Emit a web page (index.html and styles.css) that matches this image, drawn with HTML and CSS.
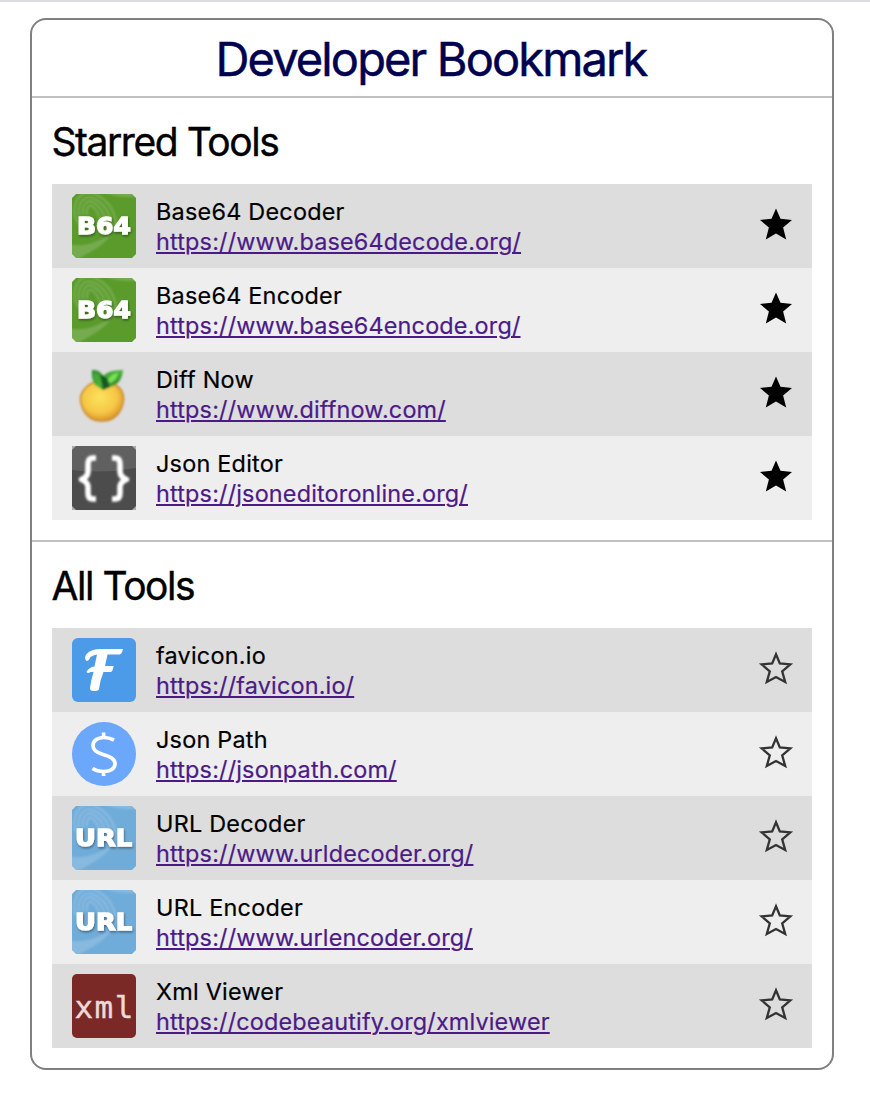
FILE: index.html
```html
<!DOCTYPE html>
<html lang="en">
<head>
<meta charset="utf-8">
<title>Developer Bookmark</title>
<link rel="stylesheet" href="styles.css">
</head>
<body>
<svg class="defs" width="0" height="0" aria-hidden="true">
  <defs>
    <filter id="soft" x="-10%" y="-10%" width="120%" height="120%"><feGaussianBlur stdDeviation=".9"/></filter>
    <filter id="glow" x="-20%" y="-20%" width="140%" height="150%"><feGaussianBlur stdDeviation=".5"/><feDropShadow dx=".8" dy="1.6" stdDeviation="1" flood-color="#000" flood-opacity=".4"/></filter>
    <radialGradient id="lemon" cx=".45" cy=".4" r=".6"><stop offset="0" stop-color="#fbe25c"/><stop offset=".65" stop-color="#f6c746"/><stop offset="1" stop-color="#dc9628"/></radialGradient>
    <linearGradient id="leaf" x1="0" y1="0" x2="1" y2="1"><stop offset="0" stop-color="#2e8a2e"/><stop offset=".5" stop-color="#4cb338"/><stop offset="1" stop-color="#1d6b22"/></linearGradient>
    <clipPath id="tile"><path d="M4 0H60L64 4V60L60 64H4L0 60V4Z"/></clipPath>
    <g id="print" fill="none" stroke="#fff" stroke-opacity=".19" stroke-width="2.1" filter="url(#soft)">
      <path d="M-4 50C10 54 30 48 41 37C35 50 20 57 4 66H-4Z" fill="#fff" fill-opacity=".17" stroke="none"/>
      <path d="M28-4C40 3 54 4 68 2V-4Z" fill="#fff" fill-opacity=".17" stroke="none"/>
      <path d="M3 23C0 4 12-6 25 1C38 8 44 20 44 34M7 22C5 7 14 0 23 5C34 11 39 21 39 34M11 21C10 10 16 4 22 9C30 14 34 23 34 34M15 21C14 13 18 9 21 13C27 18 29 25 29 34M3 23L9 33"/>
    </g>
    <g id="b64"><g clip-path="url(#tile)"><path fill="#5a9b2b" d="M0 0H64V64H0Z"/><use href="#print"/></g><text class="tile-text" x="32" y="40.2" textLength="54" lengthAdjust="spacingAndGlyphs" filter="url(#glow)">B64</text></g>
    <g id="url"><g clip-path="url(#tile)"><path fill="#70acd9" d="M0 0H64V64H0Z"/><use href="#print"/></g><text class="tile-text" x="31.6" y="40.2" textLength="57" lengthAdjust="spacingAndGlyphs" filter="url(#glow)">URL</text></g>
    <path id="star" d="M16 .4L20.5 10.8L32 12L23.1 19.4L26.2 31.5L16 25.6L5.8 31.5L8.9 19.4L0 12L11.5 10.8Z"/>
    <path id="star-line" d="M16 2.2L19.800 11.500L30.300 12.400L22.200 19.300L25.200 30L16 25L6.800 30L9.800 19.300L1.700 12.400L12.200 11.500Z"/>
  </defs>
</svg>
<main class="card">
  <header class="card-header"><h1 class="title">Developer Bookmark</h1></header>
  <section class="section">
    <h2 class="section-title">Starred Tools</h2>
    <ul class="tools starred">
      <li class="tool"><svg class="icon" viewBox="0 0 64 64"><use href="#b64"/></svg><div class="info"><span class="name">Base64 Decoder</span><a class="link" href="#">https://www.base64decode.org/</a></div><svg class="star" viewBox="0 0 32 32"><use href="#star"/></svg></li>
      <li class="tool"><svg class="icon" viewBox="0 0 64 64"><use href="#b64"/></svg><div class="info"><span class="name">Base64 Encoder</span><a class="link" href="#">https://www.base64encode.org/</a></div><svg class="star" viewBox="0 0 32 32"><use href="#star"/></svg></li>
      <li class="tool"><svg class="icon" viewBox="0 0 64 64"><g filter="url(#soft)"><path d="M23 20H38C48 24 52 31 51.500 38C50 51 42 59 30 59S10 51 8.500 38C8 31 14 23 23 20Z" fill="url(#lemon)" stroke="#c98b30" stroke-width="1.600"/><path d="M20 8Q28 7 31 14Q36 8 51 8Q50 22 38 25L31 28L23 23Q19 17 20 8Z" fill="url(#leaf)"/><path d="M28 12L31 28L38 25L35 16Z" fill="#195a22"/><path d="M36 18Q40 11 46 11Q45 18 38 21Z" fill="#7ae05a"/><path d="M22 11Q26 11 27 18L23 18Z" fill="#48ad3a"/></g></svg><div class="info"><span class="name">Diff Now</span><a class="link" href="#">https://www.diffnow.com/</a></div><svg class="star" viewBox="0 0 32 32"><use href="#star"/></svg></li>
      <li class="tool"><svg class="icon" viewBox="0 0 64 64"><path fill="#4c4c4c" d="M0 0H64V64H0Z"/><path fill="#606060" d="M0 0H64V22Q32 28 0 24Z"/><path d="M0 0H4L0 4ZM60 0H64V4ZM0 60L4 64H0ZM64 60V64H60Z" fill="#aaa"/><g fill="none" stroke="#fff" stroke-width="5.600" stroke-linejoin="round" filter="url(#soft)"><path d="M24 12H21Q16 12 16 18V25Q16 31 9.500 33.500Q16 36 16 41V47Q16 53 21 53H24"/><path d="M40 12H43Q48 12 48 18V25Q48 31 54.500 33.500Q48 36 48 41V47Q48 53 43 53H40"/></g></svg><div class="info"><span class="name">Json Editor</span><a class="link" href="#">https://jsoneditoronline.org/</a></div><svg class="star" viewBox="0 0 32 32"><use href="#star"/></svg></li>
    </ul>
  </section>
  <section class="section">
    <h2 class="section-title">All Tools</h2>
    <ul class="tools">
      <li class="tool"><svg class="icon" viewBox="0 0 64 64"><rect width="64" height="64" rx="6" fill="#4b9be8"/><path d="M51 11Q50 16 47.500 16.500H35.500L33 28H41.500Q41 33 39 34L31.500 34Q28 42 27 51Q26.500 53 22 53Q17.500 53 18 50Q19 42 21.500 34H18.500Q16 36 14.500 34Q17 29 22.500 28.500L25 16.500Q21 17 18.500 19Q17 23 14.500 23Q11.500 20 14.500 16Q19 11 29 11Z" fill="#fff"/></svg><div class="info"><span class="name">favicon.io</span><a class="link" href="#">https://favicon.io/</a></div><svg class="star" viewBox="0 0 32 32"><use href="#star-line"/></svg></li>
      <li class="tool"><svg class="icon" viewBox="0 0 64 64"><circle cx="32" cy="32" r="32" fill="#6ba7fa"/><path d="M42 18Q37 15.500 32 15.500C25 15.500 21 19 21 23.500C21 28 24 30.500 31 32.500C39 34.800 43 37 43 41.500C43 46.500 38.500 49.500 31.500 49.500Q25 49.500 20.500 46.500M31.600 10.500V15.500M31.600 49.500V54" fill="none" stroke="#fff" stroke-width="3.700"/></svg><div class="info"><span class="name">Json Path</span><a class="link" href="#">https://jsonpath.com/</a></div><svg class="star" viewBox="0 0 32 32"><use href="#star-line"/></svg></li>
      <li class="tool"><svg class="icon" viewBox="0 0 64 64"><use href="#url"/></svg><div class="info"><span class="name">URL Decoder</span><a class="link" href="#">https://www.urldecoder.org/</a></div><svg class="star" viewBox="0 0 32 32"><use href="#star-line"/></svg></li>
      <li class="tool"><svg class="icon" viewBox="0 0 64 64"><use href="#url"/></svg><div class="info"><span class="name">URL Encoder</span><a class="link" href="#">https://www.urlencoder.org/</a></div><svg class="star" viewBox="0 0 32 32"><use href="#star-line"/></svg></li>
      <li class="tool"><svg class="icon" viewBox="0 0 64 64"><rect width="64" height="64" rx="5" fill="#7b2927"/><text class="xml-text" x="2.500" y="44.300">xml</text></svg><div class="info"><span class="name">Xml Viewer</span><a class="link" href="#">https://codebeautify.org/xmlviewer</a></div><svg class="star" viewBox="0 0 32 32"><use href="#star-line"/></svg></li>
    </ul>
  </section>
</main>
</body>
</html>
```

FILE: styles.css
```css
* { box-sizing: border-box; }
body {
  margin: 0;
  padding: 16px 36px 0 30px;
  border-top: 2px solid #dcdbe0;
  background: #fff;
  color: #000;
  font-family: Inter, "Liberation Sans", sans-serif;
}
.defs { position: absolute; }
.card {
  border: 2px solid #808080;
  border-radius: 16px;
}
.card-header {
  height: 78px;
  border-bottom: 2px solid #c0c0c0;
}
.title {
  margin: 0;
  padding-right: 2px;
  color: #000050;
  font-size: 47px;
  font-weight: 400;
  line-height: 78px;
  letter-spacing: -1.87px;
  text-align: center;
  -webkit-text-stroke: .5px #000050;
}
.section { padding: 20px; }
.section + .section { border-top: 2px solid #c0c0c0; }
.section-title {
  height: 46px;
  margin: 0 0 20px -.5px;
  font-size: 39px;
  font-weight: 400;
  line-height: 48px;
  letter-spacing: -1.45px;
  -webkit-text-stroke: .4px #000;
}
.tools { margin: 0; padding: 0; list-style: none; }
.tool {
  display: flex;
  align-items: center;
  gap: 20px;
  height: 84px;
  margin-left: 0;
  padding: 0 20px;
  background: #eee;
}
.tool:nth-child(odd) { background: #ddd; }
.icon { flex: none; width: 64px; height: 64px; }
.info {
  flex: 1;
  display: flex;
  flex-direction: column;
  align-items: flex-start;
  padding-top: 2px;
  font-size: 23.4px;
  line-height: 30px;
  letter-spacing: .18px;
  font-variant-ligatures: none;
  -webkit-text-stroke: .2px;
}
.name { letter-spacing: .24px; }
.link {
  color: #4c1a88;
  text-decoration: underline;
  text-decoration-thickness: 2px;
  text-underline-offset: 2px;
}
.star {
  flex: none;
  width: 32px;
  height: 32px;
  margin-bottom: 4px;
  fill: none;
  stroke: #333;
  stroke-width: 2.3;
  overflow: visible;
}
.starred .star { fill: #000; stroke: none; }
.tile-text {
  fill: #fff;
  stroke: #fff;
  stroke-width: 1.3;
  font-family: "DejaVu Sans", sans-serif;
  font-size: 23px;
  font-weight: 700;
  text-anchor: middle;
}
.xml-text {
  fill: #eed9d9;
  stroke: #eed9d9;
  stroke-width: .4;
  font-family: "DejaVu Sans Mono", monospace;
  font-size: 31px;
  letter-spacing: 1.4px;
}
```
